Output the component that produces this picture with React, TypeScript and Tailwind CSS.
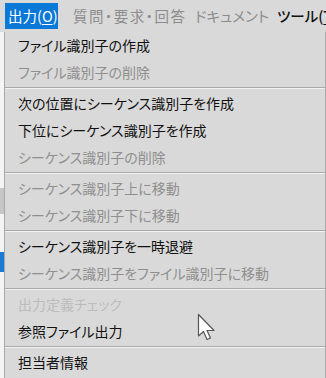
import React from "react";

type Item = { label: string; enabled?: boolean; faint?: boolean } | "sep";

const items: Item[] = [
  { label: "ファイル識別子の作成", enabled: true },
  { label: "ファイル識別子の削除" },
  "sep",
  { label: "次の位置にシーケンス識別子を作成", enabled: true },
  { label: "下位にシーケンス識別子を作成", enabled: true },
  { label: "シーケンス識別子の削除" },
  "sep",
  { label: "シーケンス識別子上に移動" },
  { label: "シーケンス識別子下に移動" },
  "sep",
  { label: "シーケンス識別子を一時退避", enabled: true },
  { label: "シーケンス識別子をファイル識別子に移動" },
  "sep",
  { label: "出力定義チェック", faint: true },
  { label: "参照ファイル出力", enabled: true },
  "sep",
  { label: "担当者情報", enabled: true },
];

const font = "font-['Yu_Gothic_UI','Noto_Sans_CJK_JP',sans-serif] [font-feature-settings:'palt']";

const MenuBar: React.FC = () => {
  return (
    <div className={`h-[32px] flex items-start pt-[3px] pl-[5px] text-[14.5px] overflow-hidden ${font}`}>
      <div className="shrink-0 w-[53px] h-[26px] bg-[#0a78d7] text-white flex items-center pl-[3px] whitespace-nowrap">
        出力(<span className="underline underline-offset-2">O</span>)
      </div>
      <div className="shrink-0 w-[15px]"></div>
      <div className="shrink-0 w-[122px] h-[26px] flex items-center text-[#8c8c8c] whitespace-nowrap tracking-[1.5px]">
        質問・要求・回答
      </div>
      <div className="shrink-0 w-[82px] h-[26px] flex items-center text-[#8c8c8c] whitespace-nowrap">
        ドキュメント
      </div>
      <div className="shrink-0 h-[26px] flex items-center text-[#111111] font-medium whitespace-nowrap">
        ツール(<span className="underline underline-offset-2">T</span>)
      </div>
    </div>
  );
};

const Cursor: React.FC = () => (
  <svg
    className="absolute left-[197px] top-[313px]"
    width="22"
    height="30"
    viewBox="0 0 22 30"
  >
    <path
      d="M1.5 1.5 L1.5 23 L6.5 18.5 L10 26.5 L13.5 25 L10 17.5 L17 17.5 Z"
      fill="#ffffff"
      stroke="#555555"
      strokeWidth="1.2"
      strokeLinejoin="round"
    />
  </svg>
);

export default function App() {
  return (
    <div className="relative w-[326px] h-[378px] overflow-hidden bg-[#d9d9d9]">
      <MenuBar />
      <div className="flex">
        {/* window behind the menu */}
        <div className="w-[4px] h-[346px] bg-[#f4f4f4] flex flex-col">
          <div className="h-[156px]"></div>
          <div className="h-[26px] bg-[#c6c6c6]"></div>
          <div className="h-[38px]"></div>
          <div className="h-[20px] bg-[#1a7ad4]"></div>
        </div>
        <div className={`flex-1 h-[346px] border-l border-r border-[#a8a8a8] text-[14px] ${font}`}>
          {items.map((it, i) =>
            it === "sep" ? (
              <div key={i} className="h-[4px] flex flex-col justify-center">
                <div className="h-px bg-[#a9a9a9]"></div>
                <div className="h-px bg-[#f2f2f2]"></div>
              </div>
            ) : (
              <div
                key={i}
                className={`h-[27px] flex items-center pl-[13px] whitespace-nowrap ${
                  it.enabled
                    ? "text-[#111111]"
                    : it.faint
                    ? "text-[#bcbcbc]"
                    : "text-[#8f8f8f]"
                }`}
              >
                {it.label}
              </div>
            )
          )}
        </div>
      </div>
      <Cursor />
    </div>
  );
}
